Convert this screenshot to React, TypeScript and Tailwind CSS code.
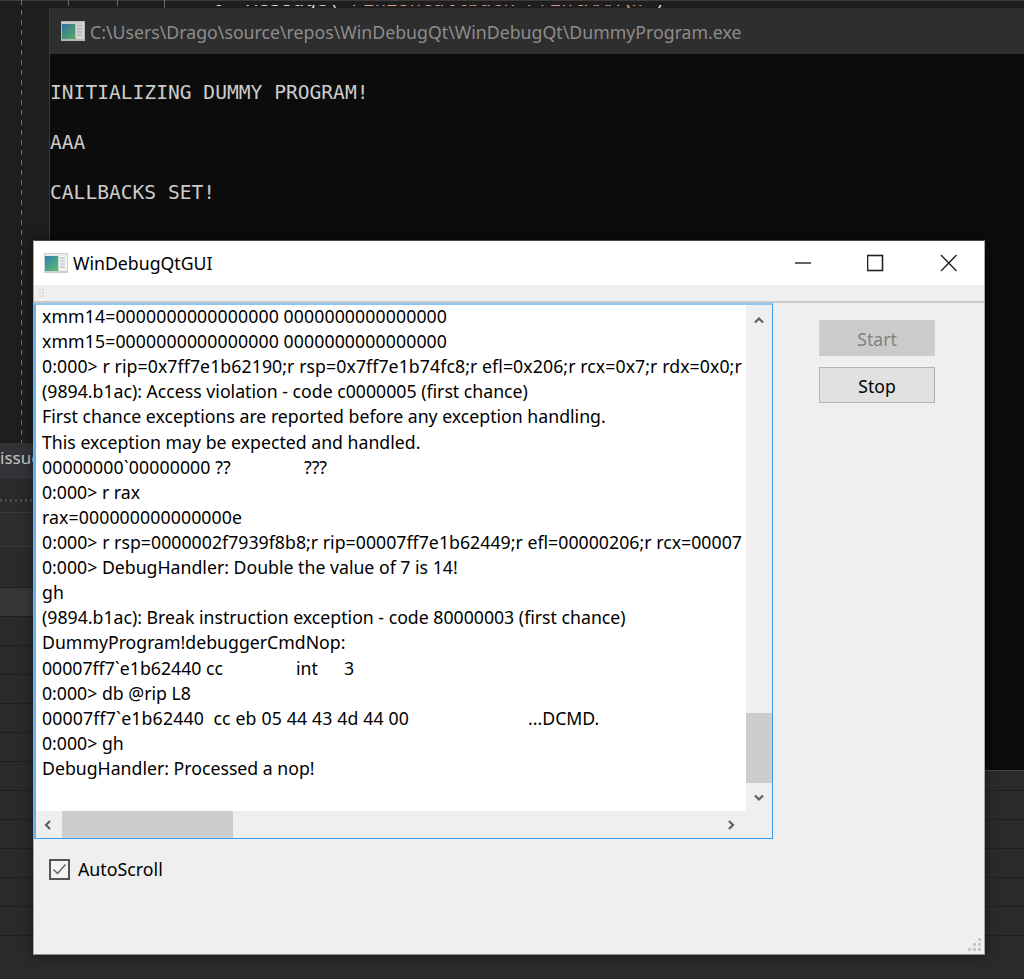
import React from 'react';

const LOG_LINES: React.ReactNode[] = [
  <span className="tracking-[0.1px]">xmm14=0000000000000000 0000000000000000</span>,
  <span className="tracking-[0.1px]">xmm15=0000000000000000 0000000000000000</span>,
  <span className="tracking-[0.08px]">0:000&gt; r rip=0x7ff7e1b62190;r rsp=0x7ff7e1b74fc8;r efl=0x206;r rcx=0x7;r rdx=0x0;r</span>,
  '(9894.b1ac): Access violation - code c0000005 (first chance)',
  'First chance exceptions are reported before any exception handling.',
  'This exception may be expected and handled.',
  <><span className="inline-block w-[262px] tracking-[0.1px]">00000000`00000000 ??</span>???</>,
  '0:000> r rax',
  <span className="tracking-[0.1px]">rax=000000000000000e</span>,
  <span className="tracking-[0.03px]">0:000&gt; r rsp=0000002f7939f8b8;r rip=00007ff7e1b62449;r efl=00000206;r rcx=00007</span>,
  '0:000> DebugHandler: Double the value of 7 is 14!',
  'gh',
  '(9894.b1ac): Break instruction exception - code 80000003 (first chance)',
  'DummyProgram!debuggerCmdNop:',
  <><span className="inline-block w-[254px]">00007ff7`e1b62440 cc</span><span className="inline-block w-[48px]">int</span>3</>,
  '0:000> db @rip L8',
  <><span className="inline-block w-[486px] tracking-[0.15px]">00007ff7`e1b62440  cc eb 05 44 43 4d 44 00</span>...DCMD.</>,
  '0:000> gh',
  'DebugHandler: Processed a nop!',
];

const AppIcon = ({ id, dim = false }: { id: string; dim?: boolean }) => (
  <svg width="24" height="20" viewBox="0 0 24 20" className={dim ? 'shrink-0 opacity-85' : 'shrink-0'}>
    <defs>
      <linearGradient id={id} x1="0" y1="0" x2="0.8" y2="1">
        <stop offset="0" stopColor="#2f7fb8" />
        <stop offset="1" stopColor="#5dba6a" />
      </linearGradient>
    </defs>
    <rect width="24" height="20" fill="#c9d0d4" />
    <rect x="1" y="1" width="22" height="2" fill="#e8ecee" />
    <rect x="1" y="3" width="13" height="15" fill={`url(#${id})`} />
    <rect x="15" y="3" width="8" height="15" fill="#f2f4f4" />
    <path d="M16 5h5M16 8h5M16 11h5M16 14h5" stroke="#a9b4b8" strokeWidth="1" />
  </svg>
);

const Chevron = ({ d }: { d: string }) => (
  <svg width="12" height="12" viewBox="0 0 12 12" className="shrink-0">
    <path d={d} fill="none" stroke="#5f5f5f" strokeWidth="2.2" />
  </svg>
);

const App = () => {
  return (
    <div className="relative h-[979px] w-[1024px] overflow-hidden bg-[#1e1e1e] [font-family:'Noto_Sans',sans-serif]">
      {/* editor behind the windows */}
      <div className="h-px bg-[#3d3d3d]" />
      <div className="absolute left-[21px] top-0 h-[443px] w-px bg-[repeating-linear-gradient(to_bottom,#6e6e6e_0px,#6e6e6e_5px,transparent_5px,transparent_10px)]" />
      <div className="absolute left-[68px] top-0 h-[6px] w-px bg-[#6e6e6e]" />
      <div className="absolute left-[117px] top-0 h-[6px] w-px bg-[#6e6e6e]" />
      <div className="absolute left-[164px] top-0 h-[8px] w-px bg-[#6e6e6e]" />
      <div className="absolute left-[211px] top-[5px] h-[4px] overflow-hidden whitespace-pre [font-family:'DejaVu_Sans_Mono',monospace] text-[19.4px] leading-[4px]">
        <div className="-mt-[7px] text-[#dcdcdc]">
          {'l  Message('}
          <span className="text-[#d69d85]">{'"FinishCallback PrintAAA\\n"'}</span>
          {')'}
        </div>
      </div>

      {/* bottom panel */}
      <div className="absolute inset-x-0 top-[443px] bottom-0 bg-[#2a2a2c]">
        <div className="flex h-[35px] items-center overflow-hidden border-b border-[#3a3a3c] bg-[#333337] pb-[4px] text-[17px] text-[#c4c4c4]">
          issue
        </div>
        <div className="h-[35px] border-b border-[#3a3a3c] pt-[21px]">
          <div className="h-[3px] w-[34px] bg-[repeating-linear-gradient(to_right,#4d4d4f_0px,#4d4d4f_2px,transparent_2px,transparent_5px)]" />
        </div>
        <div className="h-[34px] border-b border-[#3a3a3c] bg-[#2d2d30]" />
        <div className="h-[41px] border-b border-[#1f1f20]" />
        <div className="h-[29px] border-b border-[#1f1f20] bg-[#37373a]" />
        {Array.from({ length: 11 }, (_, i) => (
          <div key={i} className="h-[29px] border-b border-[#1f1f20]" />
        ))}
      </div>

      {/* console window */}
      <div className="absolute left-[49px] right-0 top-[8px] flex h-[763px] flex-col border-b border-[#444] border-l border-l-[#3a3a3a]">
        <div className="flex h-[46px] items-center gap-[5px] bg-[#2e2e2e] pl-[11px] pr-2">
          <AppIcon id="console-icon" dim />
          <span className="mt-[3px] whitespace-nowrap text-[17.73px] text-[#8c8c8c]">
            C:\Users\Drago\source\repos\WinDebugQt\WinDebugQt\DummyProgram.exe
          </span>
        </div>
        <div className="flex-1 bg-[#0c0c0c] pt-[26px] whitespace-pre [font-family:'DejaVu_Sans_Mono',monospace] text-[19.6px] leading-[25px] text-[#cccccc]">
          <div>INITIALIZING DUMMY PROGRAM!</div>
          <div className="mt-[25px]">AAA</div>
          <div className="mt-[25px]">CALLBACKS SET!</div>
        </div>
      </div>

      {/* WinDebugQtGUI window */}
      <div className="absolute left-[33px] top-[240px] flex h-[715px] w-[952px] flex-col border border-[#a8a8a8] border-t-[#4a4a4a] border-b-[#8a8a8a] bg-[#efefef] shadow-[0_0_12px_rgba(0,0,0,0.45)]">
        <div className="flex h-[44px] shrink-0 items-center bg-white pl-[10px]">
          <AppIcon id="gui-icon" />
          <span className="ml-[5px] text-[17.7px] text-black">WinDebugQtGUI</span>
          <div className="ml-auto flex items-center">
            <svg width="73" height="18" viewBox="0 0 73 18" className="shrink-0">
              <path d="M1 9h16" stroke="#222" strokeWidth="1.4" />
            </svg>
            <svg width="73" height="18" viewBox="0 0 73 18" className="shrink-0">
              <rect x="0.5" y="1.5" width="15" height="15" fill="none" stroke="#222" strokeWidth="1.6" />
            </svg>
            <svg width="44" height="18" viewBox="0 0 44 18" className="shrink-0">
              <path d="M1 1l15.5 16M16.5 1L1 17" stroke="#222" strokeWidth="1.4" fill="none" />
            </svg>
          </div>
        </div>
        <div className="flex h-[18px] shrink-0 items-center border-b-2 border-[#c9c9c9] pl-[5px]">
          <svg width="5" height="8" viewBox="0 0 5 8">
            <path d="M0 1h2M3 1h2M0 4h2M3 4h2M0 7h2M3 7h2" stroke="#c8c8c8" strokeWidth="1" />
          </svg>
        </div>

        <div className="relative flex flex-1 items-start">
          {/* log box */}
          <div className="flex h-[536px] w-[739px] shrink-0 flex-col border border-[#3a9eea] border-l-2 border-l-[#62b0ec] border-t-2 border-t-[#8cc6f2]">
            <div className="flex min-h-0 flex-1">
              <div className="min-w-0 flex-1 overflow-hidden bg-white pl-[6px] text-[17.7px] leading-[25.11px] whitespace-pre text-black">
                <div className="-mt-px">
                  {LOG_LINES.map((line, i) => (
                    <div key={i}>{line}</div>
                  ))}
                </div>
              </div>
              <div className="flex w-[26px] shrink-0 flex-col items-center bg-[#efefef]">
                <div className="flex h-[27px] w-full shrink-0 items-center justify-center pt-[3px]">
                  <Chevron d="M2 8.5l4-4 4 4" />
                </div>
                <div className="mt-[381px] h-[70px] w-full bg-[#cdcdcd]" />
                <div className="flex flex-1 items-center justify-center pt-[2px]">
                  <Chevron d="M2 3.5l4 4 4-4" />
                </div>
              </div>
            </div>
            <div className="flex h-[27px] shrink-0 items-center bg-[#efefef]">
              <div className="flex w-[26px] shrink-0 items-center justify-center pr-[2px]">
                <Chevron d="M8 2L4 6l4 4" />
              </div>
              <div className="h-full w-[171px] bg-[#cdcdcd]" />
              <div className="ml-auto flex w-[84px] items-center justify-center pr-[2px] pl-[4px]">
                <Chevron d="M4 2l4 4-4 4" />
              </div>
            </div>
          </div>

          {/* buttons */}
          <div className="ml-[46px] mt-[17px] flex w-[116px] flex-col gap-[11px] text-[17.6px]">
            <div className="flex h-[36px] items-center justify-center border border-[#d0d0d0] bg-[#cbcbcb] pt-[2px] text-[#808080]">Start</div>
            <div className="flex h-[36px] items-center justify-center border border-[#b4b4b4] bg-[#e1e1e1] pt-[2px] text-black">Stop</div>
          </div>

          <svg width="14" height="14" viewBox="0 0 14 14" className="absolute bottom-[2px] right-[2px]">
            <path d="M10 0h3v3h-3zM5 5h3v3H5zM10 5h3v3h-3zM0 10h3v3H0zM5 10h3v3H5zM10 10h3v3h-3z" fill="#c6c6c6" />
          </svg>

          {/* autoscroll sits under the log box */}
          <div className="absolute left-[15px] top-[553px] flex items-center gap-[8px]">
            <div className="flex h-[21px] w-[21px] items-center justify-center border-2 border-[#555] bg-[#f4f4f4]">
              <svg width="15" height="12" viewBox="0 0 15 12">
                <path d="M1.5 6.5l4 4 8-9" fill="none" stroke="#666" strokeWidth="1.5" />
              </svg>
            </div>
            <span className="text-[17.8px] text-black">AutoScroll</span>
          </div>
        </div>
      </div>
    </div>
  );
};

export default App;
